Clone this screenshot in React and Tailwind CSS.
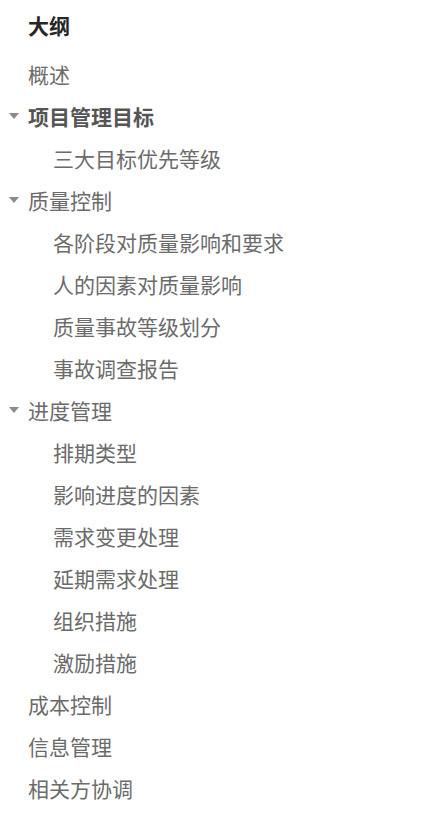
const outline = [
  { text: "概述", level: 1 },
  { text: "项目管理目标", level: 1, open: true, bold: true },
  { text: "三大目标优先等级", level: 2 },
  { text: "质量控制", level: 1, open: true },
  { text: "各阶段对质量影响和要求", level: 2 },
  { text: "人的因素对质量影响", level: 2 },
  { text: "质量事故等级划分", level: 2 },
  { text: "事故调查报告", level: 2 },
  { text: "进度管理", level: 1, open: true },
  { text: "排期类型", level: 2 },
  { text: "影响进度的因素", level: 2 },
  { text: "需求变更处理", level: 2 },
  { text: "延期需求处理", level: 2 },
  { text: "组织措施", level: 2 },
  { text: "激励措施", level: 2 },
  { text: "成本控制", level: 1 },
  { text: "信息管理", level: 1 },
  { text: "相关方协调", level: 1 },
];

function Caret() {
  return (
    <svg width="10" height="6" viewBox="0 0 10 6" className="absolute left-[9px] top-1/2 -translate-y-1/2">
      <path d="M0 0 H10 L5 6 Z" fill="#8a8a8a" />
    </svg>
  );
}

export default function App() {
  return (
    <div
      className="w-[439px] h-[817px] bg-white overflow-hidden"
      style={{ fontFamily: '"Noto Sans CJK SC", "Noto Sans", sans-serif' }}
    >
      <div className="h-[53px] flex items-center pl-[28px] pb-[1px]">
        <h2 className="text-[21px] font-bold text-[#262626] leading-none -mt-[1px]">大纲</h2>
      </div>
      <ul>
        {outline.map((item) => (
          <li
            key={item.text}
            className={`relative h-[42px] flex items-center text-[21px] leading-none ${
              item.level === 2 ? "pl-[53px]" : "pl-[28px]"
            } ${item.bold ? "font-bold text-[#555]" : "text-[#6b6b6b]"}`}
          >
            {item.open && <Caret />}
            {item.text}
          </li>
        ))}
      </ul>
    </div>
  );
}
